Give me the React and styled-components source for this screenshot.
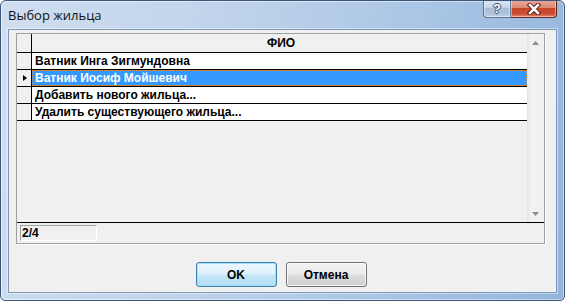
import React from 'react'
import styled, { createGlobalStyle } from 'styled-components'

const Global = createGlobalStyle`
  html, body {
    margin:0;
    padding:0;
    background:#fff;
  }
  body {
    width:565px;
    height:301px;
    overflow:hidden;
    font-family:"Liberation Sans", Arial, sans-serif;
  }
`

const Window = styled.div`
  width:565px;
  height:301px;
  box-sizing:border-box;
  display:flex;
  flex-direction:column;
  border:1px solid #3b5678;
  border-radius:6px 6px 5px 5px;
  background:linear-gradient(100deg, #d0def0 0%, #c0d4eb 35%, #a9c5e5 70%, #93b4dd 100%);
  box-shadow:inset 0 0 0 1px rgba(255,255,255,0.5);
  overflow:hidden;
`

const TitleBar = styled.div`
  height:28px;
  display:flex;
  align-items:flex-start;
  padding-left:7px;
  padding-right:7px;
`

const Title = styled.div`
  font-family:"Open Sans", "Noto Sans", sans-serif;
  font-size:13px;
  line-height:16px;
  padding-top:6px;
  color:#111;
`

const Caption = styled.div`
  margin-left:auto;
  margin-top:-1px;
  display:flex;
`

const CapButton = styled.div`
  width:${p => p.$w}px;
  height:18px;
  box-sizing:border-box;
  display:flex;
  align-items:center;
  justify-content:center;
  border:1px solid ${p => p.$close ? '#6b2417' : '#5d7493'};
  border-top:none;
  border-left:${p => p.$close ? 'none' : undefined};
  border-radius:${p => p.$close ? '0 0 4px 0' : '0 0 0 4px'};
  background:${p => p.$close
    ? 'linear-gradient(#e9a99c 0%, #dc8a78 45%, #c7462c 50%, #c94d33 80%, #e0866e 100%)'
    : 'linear-gradient(#dde7f2 0%, #c5d5e8 45%, #a8bdd6 50%, #b1c5dc 85%, #c8d8ea 100%)'};
  box-shadow:inset 0 0 0 1px rgba(255,255,255,0.45);
`

const HelpGlyph = styled.span`
  font-family:"Liberation Sans", Arial, sans-serif;
  font-weight:bold;
  font-size:13px;
  line-height:13px;
  color:#fff;
  text-shadow:
    -1px 0 #3c4f6a, 1px 0 #3c4f6a, 0 -1px #3c4f6a, 0 1px #3c4f6a;
`

const Client = styled.div`
  flex:1;
  margin:0 7px 7px 7px;
  background:#f0f0f0;
  border:1px solid #7f97b8;
  box-shadow:0 0 0 1px rgba(255,255,255,0.45);
  display:flex;
  flex-direction:column;
  padding:3px 11px 0 7px;
`

const Panel = styled.div`
  height:211px;
  box-sizing:border-box;
  border:1px solid #a0a0a0;
  box-shadow:1px 1px 0 #fff;
  display:flex;
  flex-direction:column;
`

const TableArea = styled.div`
  height:188px;
  display:flex;
`

const Data = styled.div`
  flex:1;
  display:flex;
  flex-direction:column;
  background:#f0f0f0;
`

const Row = styled.div`
  display:flex;
  height:${p => p.$head ? 19 : 17}px;
  box-sizing:border-box;
  border-bottom:1px solid #000;
`

const Indicator = styled.div`
  width:14px;
  border-right:1px solid #000;
  background:#f0f0f0;
  display:flex;
  align-items:center;
  justify-content:center;
`

const Cell = styled.div`
  flex:1;
  padding-left:3px;
  font-size:12px;
  font-weight:bold;
  white-space:nowrap;
  text-align:${p => p.$head ? 'center' : 'left'};
  line-height:${p => p.$head ? 18 : 16}px;
  background:${p => p.$head ? '#f0f0f0' : p.$sel ? '#3399ff' : '#fff'};
  color:${p => p.$sel ? '#fff' : '#000'};
  outline:${p => p.$sel ? '1px dotted #d98a3a' : 'none'};
  outline-offset:-1px;
`

const Pointer = styled.div`
  width:0;
  height:0;
  margin-left:1px;
  border-top:3.5px solid transparent;
  border-bottom:3.5px solid transparent;
  border-left:4px solid #000;
`

const ScrollBar = styled.div`
  width:17px;
  display:flex;
  flex-direction:column;
  justify-content:space-between;
  background:linear-gradient(to right, #e4e4e4 0%, #f2f2f2 25%, #f0f0f0 100%);
`

const ScrollArrow = styled.div`
  height:17px;
  display:flex;
  align-items:center;
  justify-content:center;
`

const Status = styled.div`
  flex:1;
  border-top:1px solid #000;
  padding:2px 0 0 3px;
`

const Counter = styled.div`
  width:77px;
  height:16px;
  box-sizing:border-box;
  border-top:1px solid #a0a0a0;
  border-left:1px solid #a0a0a0;
  border-bottom:1px solid #fff;
  border-right:1px solid #fff;
  padding-left:1px;
  font-size:12px;
  font-weight:bold;
  line-height:14px;
  color:#000;
`

const Buttons = styled.div`
  display:flex;
  justify-content:center;
  gap:9px;
  margin-top:18px;
  padding-left:1px;
`

const Button = styled.div`
  width:81px;
  height:25px;
  box-sizing:border-box;
  border:1px solid ${p => p.$default ? '#3c7fb1' : '#707070'};
  border-radius:3px;
  display:flex;
  align-items:center;
  justify-content:center;
  font-size:12px;
  font-weight:bold;
  color:#000;
  background:${p => p.$default
    ? 'linear-gradient(#ecf7fd 0%, #def1fb 48%, #c5e6f8 52%, #b2dcf3 100%)'
    : 'linear-gradient(#f2f2f2 0%, #ebebeb 48%, #dddddd 52%, #cfcfcf 100%)'};
  box-shadow:inset 0 0 0 1px ${p => p.$default ? 'rgba(160,220,250,0.9)' : 'rgba(255,255,255,0.8)'};
`

const Arrow = ({ up }) => (
  <svg width="7" height="4" viewBox="0 0 7 4">
    <path d={up ? 'M0 4 L3.5 0 L7 4 Z' : 'M0 0 L3.5 4 L7 0 Z'} fill="#8c8c8c" />
  </svg>
)

const CloseGlyph = () => (
  <svg width="14" height="12" viewBox="0 0 14 12">
    <path d="M3 2 L11 10 M11 2 L3 10" stroke="#5a1a10" strokeWidth="4.5" strokeLinecap="square" />
    <path d="M3 2 L11 10 M11 2 L3 10" stroke="#fff" strokeWidth="2.5" strokeLinecap="square" />
  </svg>
)

const rows = [
  'Ватник Инга Зигмундовна',
  'Ватник Иосиф Мойшевич',
  'Добавить нового жильца...',
  'Удалить существующего жильца...',
]
const selected = 1

const App = () => (
  <Window>
    <Global />
    <TitleBar>
      <Title>Выбор жильца</Title>
      <Caption>
        <CapButton $w={28}><HelpGlyph>?</HelpGlyph></CapButton>
        <CapButton $w={46} $close><CloseGlyph /></CapButton>
      </Caption>
    </TitleBar>
    <Client>
      <Panel>
        <TableArea>
          <Data>
            <Row $head>
              <Indicator />
              <Cell $head>ФИО</Cell>
            </Row>
            {rows.map((r, i) => (
              <Row key={r}>
                <Indicator>{i === selected && <Pointer />}</Indicator>
                <Cell $sel={i === selected}>{r}</Cell>
              </Row>
            ))}
          </Data>
          <ScrollBar>
            <ScrollArrow><Arrow up /></ScrollArrow>
            <ScrollArrow><Arrow /></ScrollArrow>
          </ScrollBar>
        </TableArea>
        <Status>
          <Counter>2/4</Counter>
        </Status>
      </Panel>
      <Buttons>
        <Button $default>OK</Button>
        <Button>Отмена</Button>
      </Buttons>
    </Client>
  </Window>
)

export default App
